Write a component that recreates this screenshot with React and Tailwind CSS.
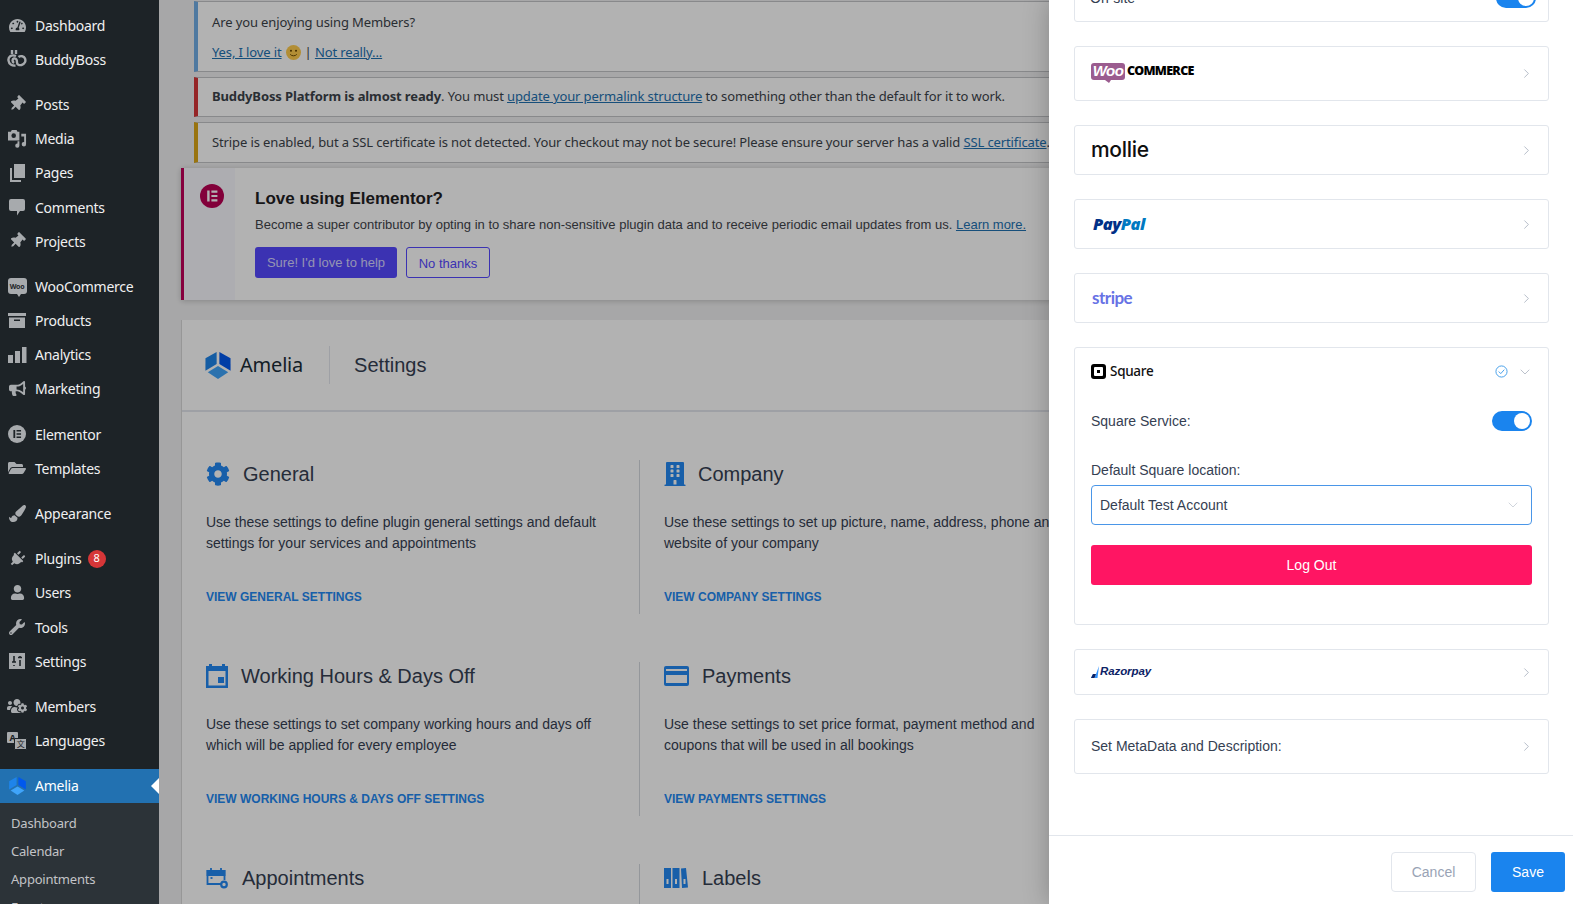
import {
  FaTachometerAlt,
  FaThumbtack,
  FaBullhorn,
  FaFolderOpen,
  FaPaintBrush,
  FaPlug,
  FaUser,
  FaWrench,
  FaUsersCog,
  FaCog,
  FaBuilding,
} from "react-icons/fa";
import { ChevronRight, ChevronDown } from "lucide-react";

const uiFont = "font-['Noto_Sans',sans-serif]";

// Amelia mark, the sidebar and the header share it
function AmeliaLogo({ className }) {
  return (
    <svg viewBox="0 0 26 28" className={className}>
      <path d="M0 6.5 11.6 0v12.5L0 19.5z" fill="#1e84ea" />
      <path d="M14.4 0 26 6.5v13l-11.6-7z" fill="#0058ee" />
      <path d="M13 14.6 23.6 21 13 28 2.4 21z" fill="#3fa4fa" />
    </svg>
  );
}

function BuddyBossIcon() {
  return (
    <svg viewBox="0 0 20 20" className="w-5 h-5" fill="none" stroke="#a7aaad" strokeWidth="2.4">
      <path d="M5 1v4" />
      <path d="M9 1v4" />
      <path d="M9 7C4 5 1 8 1.5 11.5 2 15 5 17 8.5 16.5" />
      <path d="M7 14c-2-1.5-1.8-4 0-4.5 2.5-.6 3 2 3 4s2 3 4.5 2.500C18 15 19 12 18 9.500 17 7 13.500 6.500 11.500 8" />
    </svg>
  );
}

function MediaIcon() {
  return (
    <svg viewBox="0 0 20 20" className="w-[19px] h-[19px]" fill="#a7aaad">
      <path d="M0 3h3l1-2h5l1 2h2v9H0z" />
      <circle cx="6" cy="7" r="2.400" fill="#1d2327" />
      <path d="M14 5h5v11a2.300 2.300 0 1 1-2-2.200V8h-3z" />
      <path d="M12 13v4.500a2.200 2.200 0 1 1-2-2.200V13z" />
    </svg>
  );
}

function PagesIcon() {
  return (
    <svg viewBox="0 0 20 20" className="w-5 h-5" fill="#a7aaad">
      <path d="M7 1h11v14H7z" />
      <path d="M3 5h2v12h9v2H3z" />
    </svg>
  );
}

function CommentIcon() {
  return (
    <svg viewBox="0 0 20 20" className="w-5 h-5" fill="#a7aaad">
      <path d="M4 2h12a2 2 0 0 1 2 2v8a2 2 0 0 1-2 2h-3l-3 4.500V14H4a2 2 0 0 1-2-2V4a2 2 0 0 1 2-2z" />
    </svg>
  );
}

function WooIcon() {
  return (
    <span className="relative flex items-center justify-center w-[19px] h-[16px] rounded-[3px] bg-[#a7aaad] text-[7px] font-bold leading-none text-[#1d2327]">
      Woo
      <span className="absolute -bottom-[3px] left-[9px] w-0 h-0 border-l-[2px] border-r-[2px] border-t-[3px] border-l-transparent border-r-transparent border-t-[#a7aaad]" />
    </span>
  );
}

function ProductsIcon() {
  return (
    <svg viewBox="0 0 20 20" className="w-5 h-5" fill="#a7aaad">
      <path d="M1 2h18v3H1z" />
      <path d="M2 6.500h16V17H2zM7 8.500v1.500h6V8.500z" fillRule="evenodd" />
    </svg>
  );
}

function AnalyticsIcon() {
  return (
    <svg viewBox="0 0 20 20" className="w-5 h-5" fill="#a7aaad">
      <path d="M1 10h5v8H1zM8 6h5v12H8zM15 2h4.500v16H15z" />
    </svg>
  );
}

function ElementorIcon({ bg = "#a7aaad", fg = "#1d2327" }) {
  return (
    <svg viewBox="0 0 20 20" className="w-full h-full">
      <circle cx="10" cy="10" r="10" fill={bg} />
      <path d="M6 5.500h2V14.500H6zM9.500 5.500h5v1.800h-5zM9.500 9.100h5v1.800h-5zM9.500 12.700h5v1.800h-5z" fill={fg} />
    </svg>
  );
}

function SettingsIcon() {
  return (
    <svg viewBox="0 0 20 20" className="w-5 h-5">
      <path d="M2 2h16v16H2z" fill="#a7aaad" />
      <path d="M7 5v6M7 14v1M5 11h4M13 5v1M13 9v6M11 6.500h4" stroke="#1d2327" strokeWidth="1.600" />
    </svg>
  );
}

function LanguagesIcon() {
  return (
    <span className="relative block w-[20px] h-[18px]">
      <span className="absolute left-0 top-0 w-[11px] h-[11px] rounded-[1px] bg-[#a7aaad] text-[9px] font-bold leading-[11px] text-center text-[#1d2327]">
        A
      </span>
      <span className="absolute right-0 bottom-0 w-[13px] h-[12px] rounded-[1px] bg-[#a7aaad] border border-[#1d2327] text-[8px] leading-[10px] text-center text-[#1d2327] font-['Noto_Sans_CJK_SC',sans-serif]">
        文
      </span>
    </span>
  );
}

function SidebarIcon({ children }) {
  return <span className="absolute left-[7px] top-[7px] flex items-center justify-center w-[20px] h-[20px] text-[#a7aaad]">{children}</span>;
}

const menuGroups = [
  [
    { label: "Dashboard", icon: <FaTachometerAlt size={17} /> },
    { label: "BuddyBoss", icon: <BuddyBossIcon /> },
  ],
  [
    { label: "Posts", icon: <FaThumbtack size={16} className="rotate-45" /> },
    { label: "Media", icon: <MediaIcon /> },
    { label: "Pages", icon: <PagesIcon /> },
    { label: "Comments", icon: <CommentIcon /> },
    { label: "Projects", icon: <FaThumbtack size={16} className="rotate-45" /> },
  ],
  [
    { label: "WooCommerce", icon: <WooIcon /> },
    { label: "Products", icon: <ProductsIcon /> },
    { label: "Analytics", icon: <AnalyticsIcon /> },
    { label: "Marketing", icon: <FaBullhorn size={17} /> },
  ],
  [
    { label: "Elementor", icon: <span className="block w-[18px] h-[18px]"><ElementorIcon /></span> },
    { label: "Templates", icon: <FaFolderOpen size={18} /> },
  ],
  [{ label: "Appearance", icon: <FaPaintBrush size={17} /> }],
  [
    { label: "Plugins", icon: <FaPlug size={16} className="rotate-45" />, badge: "8" },
    { label: "Users", icon: <FaUser size={15} /> },
    { label: "Tools", icon: <FaWrench size={16} /> },
    { label: "Settings", icon: <SettingsIcon /> },
  ],
  [
    { label: "Members", icon: <FaUsersCog size={20} /> },
    { label: "Languages", icon: <LanguagesIcon /> },
  ],
];

const subMenu = ["Dashboard", "Calendar", "Appointments", "Events"];

function Sidebar() {
  return (
    <aside className={`relative z-20 w-[159px] shrink-0 h-full overflow-hidden bg-[#1d2327] pt-2 text-[14px] text-[#f0f0f1] ${uiFont}`}>
      {menuGroups.map((group) => (
        <div key={group[0].label} className="mb-[11px] last:mb-0">
          {group.map((item) => (
            <div key={item.label} className="relative flex items-center h-[34.2px] pl-[35px] tracking-[-0.25px]">
              <SidebarIcon>{item.icon}</SidebarIcon>
              {item.label}
              {item.badge && (
                <span className="ml-[6px] flex items-center justify-center w-[18px] h-[18px] rounded-full bg-[#d63638] text-[11px] text-white">
                  {item.badge}
                </span>
              )}
            </div>
          ))}
        </div>
      ))}
      <div className="relative flex items-center h-[34px] pl-[35px] bg-[#2271b1] text-white tracking-[-0.25px]">
        <AmeliaLogo className="absolute left-[9px] top-[8px] w-[17px] h-[18px]" />
        Amelia
        <span className="absolute right-0 top-[9px] w-0 h-0 border-y-[8px] border-r-[8px] border-y-transparent border-r-white" />
      </div>
      <div className="bg-[#2c3338] pt-[7px] text-[13px] text-[#c3c4c7] tracking-[-0.2px]">
        {subMenu.map((s) => (
          <div key={s} className="flex items-center h-[28px] pl-[11px]">
            {s}
          </div>
        ))}
      </div>
    </aside>
  );
}

function WpLink({ children }) {
  return <a className="text-[#2271b1] underline">{children}</a>;
}

function Notice({ color, className = "", children }) {
  return (
    <div className={`ml-[35px] border border-[#c3c4c7] border-l-4 bg-white pl-[14px] text-[13px] text-[#3c434a] tracking-[-0.12px] ${uiFont} ${color} ${className}`}>
      {children}
    </div>
  );
}

function Smiley() {
  return (
    <svg viewBox="0 0 16 16" className="inline-block w-[15px] h-[15px] mx-[4px] align-[-3px]">
      <circle cx="8" cy="8" r="8" fill="#ffcc4d" />
      <circle cx="5.300" cy="6.200" r="1.100" fill="#664500" />
      <circle cx="10.700" cy="6.200" r="1.100" fill="#664500" />
      <path d="M4.500 10c1.500 2 5.500 2 7 0" stroke="#664500" strokeWidth="1" fill="none" />
    </svg>
  );
}

function ElementorNotice() {
  return (
    <div className="mt-[5px] ml-[22px] flex h-[132px] border-l-[3px] border-[#c0005a] bg-white shadow-[0_1px_6px_rgba(0,0,0,0.2)] font-['Liberation_Sans',sans-serif]">
      <div className="w-[51px] shrink-0 bg-[#f8f8fe] pt-[16px] pl-[16px]">
        <span className="block w-6 h-6">
          <ElementorIcon bg="#bb0054" fg="#ffffff" />
        </span>
      </div>
      <div className="pl-[20px] pt-[20px]">
        <h3 className="text-[17px] leading-[22px] font-bold text-[#1f2124]">Love using Elementor?</h3>
        <p className="mt-[5px] text-[13px] leading-[20px] text-[#3f444b]">
          Become a super contributor by opting in to share non-sensitive plugin data and to receive periodic email updates from us. <WpLink>Learn more.</WpLink>
        </p>
        <div className="mt-[12px] flex gap-[9px] text-[13px]">
          <span className="flex items-center justify-center w-[142px] h-[31px] rounded-[3px] bg-[#5548ff] text-[#d6d4ff]">Sure! I'd love to help</span>
          <span className="flex items-center justify-center w-[84px] h-[31px] rounded-[3px] border border-[#5548ff] bg-white text-[#5548ff] pt-[2px]">No thanks</span>
        </div>
      </div>
    </div>
  );
}

const settingsCards = [
  [
    {
      title: "General",
      icon: <FaCog size={24} />,
      gap: "w-[37px]",
      text: "Use these settings to define plugin general settings and default settings for your services and appointments",
      link: "VIEW GENERAL SETTINGS",
    },
    {
      title: "Company",
      icon: <FaBuilding size={24} className="-ml-[1px]" />,
      gap: "w-[34px]",
      text: "Use these settings to set up picture, name, address, phone and website of your company",
      link: "VIEW COMPANY SETTINGS",
    },
  ],
  [
    {
      title: "Working Hours & Days Off",
      icon: (
        <svg viewBox="0 0 22 24" className="w-[22px] h-[24px]">
          <path d="M3 0h3v2h10V0h3v2h3v22H0V2h3z" fill="#2388f2" />
          <path d="M2.500 7h17v14.500h-17z" fill="#ffffff" />
          <path d="M12 13h6v6h-6z" fill="#2388f2" />
        </svg>
      ),
      gap: "w-[35px]",
      text: "Use these settings to set company working hours and days off which will be applied for every employee",
      link: "VIEW WORKING HOURS & DAYS OFF SETTINGS",
    },
    {
      title: "Payments",
      icon: (
        <svg viewBox="0 0 25 20" className="w-[25px] h-[20px]">
          <path d="M2 0h21a2 2 0 0 1 2 2v16a2 2 0 0 1-2 2H2a2 2 0 0 1-2-2V2a2 2 0 0 1 2-2z" fill="#2388f2" />
          <path d="M2 3h21v2H2zM2 9h21v8H2z" fill="#ffffff" />
        </svg>
      ),
      gap: "w-[38px]",
      text: "Use these settings to set price format, payment method and coupons that will be used in all bookings",
      link: "VIEW PAYMENTS SETTINGS",
    },
  ],
  [
    {
      title: "Appointments",
      icon: (
        <svg viewBox="0 0 23 21" className="w-[23px] h-[21px]" fill="none" stroke="#2388f2" strokeWidth="1.800">
          <path d="M16 16H1.500V3h17v9" />
          <path d="M1.500 3h17v4h-17z" fill="#2388f2" />
          <path d="M5 0v3M15 0v3" />
          <path d="M4.500 10h2" />
          <circle cx="18" cy="16.500" r="2.800" strokeWidth="2.200" />
        </svg>
      ),
      gap: "w-[36px]",
      text: "",
      link: "",
    },
    {
      title: "Labels",
      icon: (
        <svg viewBox="0 0 24 20" className="w-[24px] h-[20px]" fill="#2388f2">
          <path d="M0 0h7v20H0zM8.500 0h7v20h-7zM17 .5l5-.5 2 19.500-6 .5z" />
          <path d="M2.500 11h2v5h-2zM11 11h2v5h-2zM19.500 11h2v5h-2z" fill="#ffffff" />
        </svg>
      ),
      gap: "w-[38px]",
      text: "",
      link: "",
    },
  ],
];

function SettingCard({ card, right }) {
  return (
    <div className={`h-[154px] ${right ? "border-l border-[#d5d9df] pl-[24px]" : "pl-[24px]"}`}>
      <div className="flex items-center h-[28px] text-[20px] text-[#354052]">
        <span className={`flex items-center shrink-0 text-[#2388f2] ${card.gap}`}>{card.icon}</span>
        {card.title}
      </div>
      <p className="mt-[24px] max-w-[410px] text-[14px] leading-[21px] text-[#354052]">{card.text}</p>
      <a className="mt-[35px] block text-[12px] leading-[16px] font-bold text-[#2388f2]">{card.link}</a>
    </div>
  );
}

function AmeliaSettings() {
  return (
    <div className="mt-[20px] ml-[22px] border-l border-[#d8d8d8] bg-white font-['Liberation_Sans',sans-serif] pb-[40px]">
      <div className="flex items-center h-[92px] pl-[23px] border-b-2 border-[#e2e6ec]">
        <AmeliaLogo className="w-[26px] h-[27px]" />
        <span className={`ml-[9px] text-[20px] text-[#1a2c37] tracking-[-0.2px] ${uiFont}`}>Amelia</span>
        <span className="ml-[26px] w-px h-[38px] bg-[#e2e6ec]" />
        <span className="ml-[24px] text-[20px] text-[#354052]">Settings</span>
      </div>
      <div className="pt-[48px] flex flex-col gap-[48px]">
        {settingsCards.map((row) => (
          <div key={row[0].title} className="grid grid-cols-[457px_1fr]">
            <SettingCard card={row[0]} />
            <SettingCard card={row[1]} right />
          </div>
        ))}
      </div>
    </div>
  );
}

function Toggle() {
  return (
    <span className="flex items-center justify-end w-10 h-5 rounded-full bg-[#1a84ee] pr-[2px]">
      <span className="w-4 h-4 rounded-full bg-white" />
    </span>
  );
}

function Arrow() {
  return <ChevronRight size={15} strokeWidth={1} className="text-[#8c96a9] -mr-[2px]" />;
}

function PaymentRow({ height, children }) {
  return (
    <div className={`flex items-center justify-between mb-[24px] rounded-[3px] border border-[#e2e6ec] pl-[16px] pr-[16px] ${height}`}>
      {children}
      <Arrow />
    </div>
  );
}

function Drawer() {
  return (
    <div className="absolute right-0 top-0 bottom-0 z-10 flex flex-col w-[524px] bg-white shadow-[0_0_24px_rgba(0,0,0,0.25)] font-['Liberation_Sans',sans-serif] text-[14px] text-[#354052]">
      <div className="flex-1 min-h-0 pl-[25px] pr-[24px]">
        <div className="flex items-center justify-between h-[48px] -mt-[26px] mb-[24px] rounded-[3px] border border-[#e2e6ec] pl-[15px] pr-[12px]">
          On-site
          <Toggle />
        </div>

        <PaymentRow height="h-[55px]">
          <span className="flex items-center -mt-[4px]">
            <span className="relative flex items-center justify-center w-[34px] h-[17px] rounded-[3px] bg-[#9b5c8f] text-white text-[15px] font-bold italic tracking-[-0.5px]">
              Woo
              <span className="absolute -bottom-[3px] left-[14px] w-0 h-0 border-l-[4px] border-r-[2px] border-t-[3px] border-l-transparent border-r-transparent border-t-[#9b5c8f]" />
            </span>
            <span className={`ml-[2px] text-[12.500px] font-black text-black tracking-[-0.7px] ${uiFont}`}>COMMERCE</span>
          </span>
        </PaymentRow>
        <PaymentRow height="h-[50px]">
          <span className="font-['Inter',sans-serif] text-[21px] font-medium text-[#0f0f0f] tracking-[-0.3px]">mollie</span>
        </PaymentRow>
        <PaymentRow height="h-[50px]">
          <span className="ml-[2px] font-['Open_Sans',sans-serif] text-[16.500px] font-extrabold italic tracking-[-0.5px]">
            <span className="text-[#003087]">Pay</span>
            <span className="text-[#0079c1]">Pal</span>
          </span>
        </PaymentRow>
        <PaymentRow height="h-[50px]">
          <span className="ml-[1px] font-['Lato',sans-serif] text-[17px] font-bold text-[#6772e5] tracking-[-0.5px]">stripe</span>
        </PaymentRow>

        <div className="h-[278px] mb-[24px] rounded-[3px] border border-[#e2e6ec] px-[16px]">
          <div className="flex items-center h-[46px] pt-[1px]">
            <span className="flex items-center justify-center w-[15px] h-[15px] rounded-[3px] bg-black">
              <span className="flex items-center justify-center w-[9px] h-[9px] rounded-[1px] bg-white">
                <span className="w-[3px] h-[3px] bg-black" />
              </span>
            </span>
            <span className={`ml-[4px] text-[13.500px] font-medium text-[#111] tracking-[-0.3px] ${uiFont}`}>Square</span>
            <svg viewBox="0 0 14 14" className="ml-auto w-[13px] h-[13px]" fill="none" stroke="#3d9ae8" strokeWidth="1">
              <circle cx="7" cy="7" r="6" />
              <path d="M4 7l2.200 2.300L10 5" />
            </svg>
            <ChevronDown size={16} strokeWidth={1} className="ml-[9px] mr-[-1px] text-[#9aa3b2]" />
          </div>
          <div className="flex items-center justify-between mt-[17px] h-5">
            Square Service:
            <Toggle />
          </div>
          <div className="mt-[30px] leading-[18px]">Default Square location:</div>
          <div className="mt-[6px] flex items-center justify-between h-10 rounded-[4px] border border-[#4a96e8] pl-[8px] pr-[10px]">
            Default Test Account
            <ChevronDown size={16} strokeWidth={1} className="text-[#b8bfca]" />
          </div>
          <div className="mt-[20px] flex items-center justify-center h-10 rounded-[3px] bg-[#ff1563] text-white">Log Out</div>
        </div>

        <PaymentRow height="h-[46px]">
          <span className="flex items-center">
            <svg viewBox="0 0 9 12" className="w-[9px] h-[12px]">
              <path d="M0 12l2-4h2l-1 4zM3.500 12 8 0l-1.500 12z" fill="#3395ff" />
              <path d="M0 12l2-4h3l-1.500 4z" fill="#0d2366" />
            </svg>
            <span className="font-['Liberation_Sans',sans-serif] text-[11.500px] font-bold italic text-[#0d2366] tracking-[-0.1px]">Razorpay</span>
          </span>
        </PaymentRow>
        <PaymentRow height="h-[55px]">Set MetaData and Description:</PaymentRow>
      </div>
      <div className="flex justify-end h-[69px] border-t border-[#e2e6ec] pt-[16px] pr-[8px] gap-[15px]">
        <span className="flex items-center justify-center w-[85px] h-10 rounded-[4px] border border-[#e2e6ec] text-[#99a3b5]">Cancel</span>
        <span className="flex items-center justify-center w-[74px] h-10 rounded-[3px] bg-[#1a84ee] text-white">Save</span>
      </div>
    </div>
  );
}

export default function App() {
  return (
    <div className="flex w-full h-screen overflow-hidden">
      <Sidebar />
      <main className="relative flex-1 min-w-0 overflow-hidden bg-[#f0f0f1] pt-px">
        <Notice color="border-l-[#72aee6]" className="h-[71px] pt-[11px] leading-[18px]">
          <p>Are you enjoying using Members?</p>
          <p className="mt-[12px]">
            <WpLink>Yes, I love it</WpLink>
            <Smiley />| <WpLink>Not really...</WpLink>
          </p>
        </Notice>
        <Notice color="border-l-[#d63638]" className="mt-[5px] flex items-center h-[40px]">
          <p>
            <b>BuddyBoss Platform is almost ready</b>. You must <WpLink>update your permalink structure</WpLink> to something other than the default for it to work.
          </p>
        </Notice>
        <Notice color="border-l-[#dba617]" className="mt-[5px] flex items-center h-[41px]">
          <p>
            Stripe is enabled, but a SSL certificate is not detected. Your checkout may not be secure! Please ensure your server has a valid <WpLink>SSL certificate</WpLink>.
          </p>
        </Notice>
        <ElementorNotice />
        <AmeliaSettings />
        <div className="absolute inset-0 bg-black/30" />
        <Drawer />
      </main>
    </div>
  );
}
